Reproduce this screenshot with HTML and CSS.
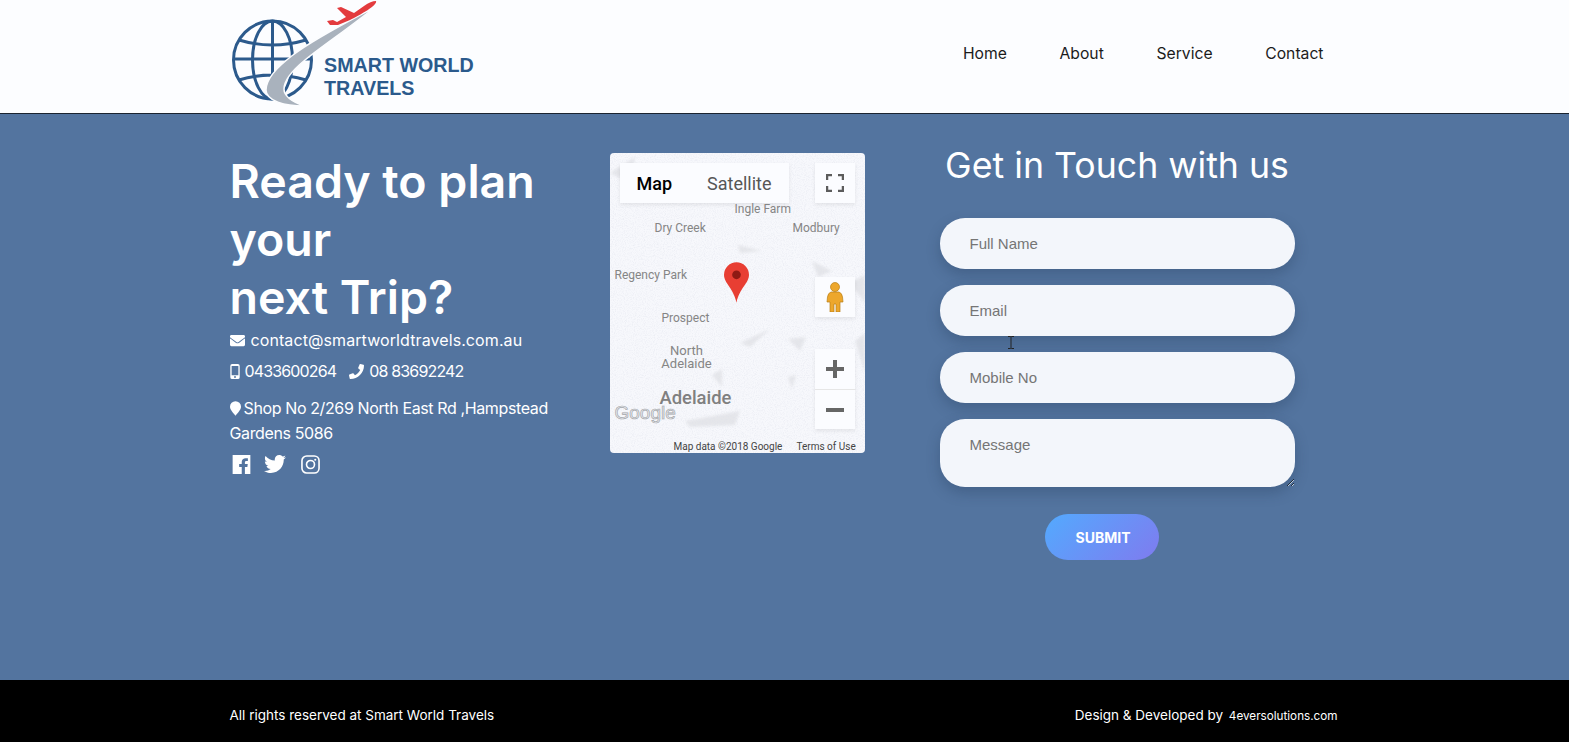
FILE: index.html
```html
<!DOCTYPE html>
<html lang="en">
<head>
<meta charset="utf-8">
<title>Smart World Travels</title>
<link rel="stylesheet" href="styles.css">
</head>
<body>
<header class="site-header">
  <div class="container header-inner">
    <svg class="logo" viewBox="0 0 250 113" width="250" height="113" role="img" aria-label="Smart World Travels">
      <g class="globe">
        <circle cx="42.5" cy="60" r="39"/>
        <ellipse cx="42.5" cy="60" rx="20" ry="39"/>
        <path d="M42.500 21V99M3.500 59H81M9 40Q42 50 76 40M9 80Q42 70 76 80"/>
      </g>
      <path class="swoosh" d="M145 7C115 23 82 40 63 55C47 67 36 80 36 90C36 101 55 106 74 106C63 102 54 97 54 89C54 80 64 69 75 60C92 46 122 26 145 7Z"/>
      <path class="plane" d="M146 1C148 5 130 15 120 20L108 25L100 25L97 21L103 20L107 22L116 17L107 8L111 7L124 13L134 6Q141 1 146 1Z"/>
      <text class="logo-text" x="94" y="72">SMART WORLD</text>
      <text class="logo-text" x="94" y="95">TRAVELS</text>
    </svg>
    <nav class="nav">
      <a href="#">Home</a>
      <a href="#">About</a>
      <a href="#">Service</a>
      <a href="#">Contact</a>
    </nav>
  </div>
</header>

<main class="main">
  <div class="container content">
    <section class="info">
      <h1>Ready to plan<br>your<br>next Trip?</h1>
      <p class="line email">
        <svg class="ic ic-mail" viewBox="0 0 512 512"><path d="M502.3 190.8c3.9-3.1 9.7-.2 9.7 4.7V400c0 26.5-21.5 48-48 48H48c-26.5 0-48-21.5-48-48V195.6c0-5 5.7-7.8 9.7-4.7 22.4 17.4 52.1 39.5 154.1 113.6 21.1 15.4 56.7 47.8 92.2 47.6 35.7.3 72-32.8 92.3-47.6 102-74.1 131.6-96.3 154-113.7zM256 320c23.2.4 56.6-29.2 73.4-41.4 132.7-96.3 142.8-104.7 173.4-128.7 5.8-4.5 9.2-11.5 9.2-18.9v-19c0-26.5-21.5-48-48-48H48C21.5 64 0 85.5 0 112v19c0 7.4 3.4 14.3 9.2 18.9 30.6 23.9 40.7 32.4 173.4 128.7 16.8 12.2 50.2 41.8 73.4 41.4z"/></svg>
        <span>contact@smartworldtravels.com.au</span>
      </p>
      <p class="line phones">
        <svg class="ic ic-mobile" viewBox="0 0 10 16"><path d="M2 0H8A2 2 0 0 1 10 2V14A2 2 0 0 1 8 16H2A2 2 0 0 1 0 14V2A2 2 0 0 1 2 0ZM1.400 2.200V12H8.600V2.200ZM5 12.800A1 1 0 1 0 5 14.800A1 1 0 1 0 5 12.800Z" fill-rule="evenodd"/></svg>
        <span>0433600264</span>
        <svg class="ic ic-phone" viewBox="0 0 512 512"><path d="M493.4 24.6l-104-24c-11.3-2.6-22.9 3.3-27.5 13.9l-48 112c-4.2 9.8-1.4 21.3 6.9 28l60.6 49.6c-36 76.7-98.9 140.5-177.2 177.2l-49.6-60.6c-6.8-8.3-18.2-11.1-28-6.9l-112 48C3.9 366.5-2 378.1.6 389.4l24 104C27.1 504.2 36.7 512 48 512c256.1 0 464-207.5 464-464 0-11.2-7.7-20.9-18.6-23.4z"/></svg>
        <span>08 83692242</span>
      </p>
      <p class="address"><svg class="ic ic-pin" viewBox="0 0 12 16"><path d="M6 0A6 6 0 0 1 12 6C12 9.500 8 13 6 16C4 13 0 9.500 0 6A6 6 0 0 1 6 0Z"/></svg>Shop No 2/269 North East Rd ,Hampstead Gardens 5086</p>
      <div class="social">
        <svg class="ic-social" viewBox="0 0 448 480"><path d="M0 0H448V480H310V300H372L382 225H310V180Q310 150 345 150H385V85Q360 80 330 80C270 80 230 115 230 175V225H165V300H230V480H0Z"/></svg>
        <svg class="ic-social tw" viewBox="0 48 512 416"><path d="M459.37 151.716c.325 4.548.325 9.097.325 13.645 0 138.72-105.583 298.558-298.558 298.558-59.452 0-114.68-17.219-161.137-47.106 8.447.974 16.568 1.299 25.34 1.299 49.055 0 94.213-16.568 130.274-44.832-46.132-.975-84.792-31.188-98.112-72.772 6.498.974 12.995 1.624 19.818 1.624 9.421 0 18.843-1.3 27.614-3.573-48.081-9.747-84.143-51.98-84.143-102.985v-1.299c13.969 7.797 30.214 12.67 47.431 13.319-28.264-18.843-46.781-51.005-46.781-87.391 0-19.492 5.197-37.36 14.294-52.954 51.655 63.675 129.3 105.258 216.365 109.807-1.624-7.797-2.599-15.918-2.599-24.04 0-57.828 46.782-104.934 104.934-104.934 30.213 0 57.502 12.67 76.67 33.137 23.715-4.548 46.456-13.32 66.599-25.34-7.798 24.366-24.366 44.833-46.132 57.827 21.117-2.273 41.584-8.122 60.426-16.243-14.292 20.791-32.161 39.308-52.628 54.253z"/></svg>
        <svg class="ic-social ig" viewBox="0 0 20 20"><rect x="1" y="1" width="18" height="18" rx="5"/><circle cx="10" cy="10" r="4.200"/><circle class="dot" cx="15" cy="5" r="1.100"/></svg>
      </div>
    </section>

    <section class="map">
      <svg class="map-bg" viewBox="0 0 255 300" width="255" height="300">
        <defs>
          <filter id="grain" x="0" y="0" width="100%" height="100%">
            <feTurbulence type="fractalNoise" baseFrequency="0.9" numOctaves="2" seed="4"/>
            <feColorMatrix values="0 0 0 0 .72  0 0 0 0 .74  0 0 0 0 .82  1 0 0 0 -.42"/>
          </filter>
          <filter id="soft"><feGaussianBlur stdDeviation="1.500"/></filter>
        </defs>
        <g class="blots" filter="url(#soft)">
          <path d="M135 48L150 44L148 50Z"/>
          <path d="M128 92L152 98L130 100Z"/>
          <path d="M202 108L222 118L208 124Z"/>
          <path d="M130 190L160 176L140 194Z"/>
          <path d="M178 186L196 184L190 198Z"/>
          <path d="M102 222L112 216L112 234Z"/>
          <path d="M178 224L186 222L182 236Z"/>
          <path d="M75 268L130 258L125 272L80 274Z"/>
          <path d="M240 130L255 122V150Z"/>
          <path d="M245 188L255 180V220Z"/>
          <path d="M0 20L25 4L20 30Z"/>
        </g>
        <rect width="255" height="300" filter="url(#grain)"/>
      </svg>
      <div class="tabs"><span class="tab-active">Map</span><span>Satellite</span></div>
      <div class="ctrl fullscreen">
        <svg viewBox="0 0 18 18" width="18" height="18"><path d="M1 6V1H6M12 1H17V6M17 12V17H12M6 17H1V12"/></svg>
      </div>
      <div class="ctrl pegman">
        <svg viewBox="0 0 18 30" width="18" height="30"><circle cx="9" cy="5" r="4.500"/><path d="M5 10H13Q16 11 16.500 15L17 20H14V30H10V22H8V30H4V20H1L1.500 15Q2 11 5 10Z"/></svg>
      </div>
      <div class="ctrl zoomer">
        <div class="zoom-btn"><svg viewBox="0 0 18 18" width="18" height="18"><path d="M7 0H11V7H18V11H11V18H7V11H0V7H7Z"/></svg></div>
        <div class="zoom-btn"><svg viewBox="0 0 18 18" width="18" height="18"><path d="M0 7H18V11H0Z"/></svg></div>
      </div>
      <svg class="marker" viewBox="0 0 26 42" width="25" height="41"><path d="M13 0A13 13 0 0 1 26 13C26 22 16 27 13 42C10 27 0 22 0 13A13 13 0 0 1 13 0Z"/><circle cx="13" cy="13" r="4.500"/></svg>
      <span class="place ingle">Ingle Farm</span>
      <span class="place dry">Dry Creek</span>
      <span class="place modbury">Modbury</span>
      <span class="place regency">Regency Park</span>
      <span class="place prospect">Prospect</span>
      <span class="place north">North<br>Adelaide</span>
      <span class="place adelaide">Adelaide</span>
      <span class="google">Google</span>
      <span class="attrib data">Map data ©2018 Google</span>
      <span class="attrib terms">Terms of Use</span>
    </section>

    <section class="contact">
      <h2>Get in Touch with us</h2>
      <form class="form">
        <input class="field" type="text" placeholder="Full Name">
        <input class="field" type="text" placeholder="Email">
        <input class="field" type="text" placeholder="Mobile No">
        <textarea class="field message" placeholder="Message"></textarea>
        <button class="submit" type="button">SUBMIT</button>
        <svg class="ibeam" viewBox="0 0 8 13" width="8" height="13"><path d="M1 .500H3.500L4 1L4.500 .500H7M4 1V12M1 12.500H3.500L4 12L4.500 12.500H7"/></svg>
      </form>
    </section>
  </div>
</main>

<footer class="footer">
  <div class="container footer-inner">
    <span>All rights reserved at Smart World Travels</span>
    <span class="credit">Design &amp; Developed by <small>4eversolutions.com</small></span>
  </div>
</footer>
</body>
</html>
```
FILE: styles.css
```css
* { box-sizing: border-box; }
html, body { margin: 0; padding: 0; }
body {
  font-family: Inter, "Open Sans", "Liberation Sans", sans-serif;
  color: #fff;
  background: #53749f;
  height: 742px;
  overflow: hidden;
}
.container { width: 1110px; margin: 0 auto; }

/* header */
.site-header {
  height: 114px;
  background: #fcfdff;
  border-bottom: 1px solid #1b2430;
}
.header-inner {
  display: flex;
  justify-content: space-between;
  align-items: center;
  height: 113px;
}
.logo { display: block; flex: none; }
.globe { fill: none; stroke: #2c5a8c; stroke-width: 3; }
.swoosh { fill: #a9b2bd; stroke: #fcfdff; stroke-width: 1.500; }
.plane { fill: #e33b3e; }
.logo-text {
  font-family: "Liberation Sans", Arial, sans-serif;
  font-weight: 700;
  font-size: 19.700px;
  fill: #2b5a8c;
}
.nav {
  display: flex;
  gap: 52.700px;
  padding-right: 16px;
  margin-top: -6px;
}
.nav a {
  color: #1b1b1b;
  text-decoration: none;
  font-size: 15.700px;
  line-height: 24px;
}

/* main */
.main { height: 566px; padding-top: 38px; }
.content {
  display: grid;
  grid-template-columns: 350px 255px 445px;
  column-gap: 30px;
  align-items: start;
}
.info h1 {
  margin: 0;
  font-size: 46.500px;
  line-height: 58px;
  font-weight: 600;
  letter-spacing: 0;
}
.line {
  margin: 0;
  display: flex;
  align-items: center;
  font-size: 16px;
  height: 24px;
}
.email { margin-top: 2px; letter-spacing: .09px; }
.phones { margin-top: 7px; letter-spacing: -.85px; }
.ic { fill: #fff; flex: none; }
.ic-mail { width: 15px; height: 15px; margin-right: 6px; }
.ic-mobile { width: 10px; height: 15px; margin-right: 5px; }
.ic-phone { width: 15px; height: 15px; margin: 0 5px 0 13px; }
.ic-pin { width: 11px; height: 15px; margin-right: 3px; vertical-align: -2px; }
.address {
  margin: 13px 0 0;
  font-size: 16px;
  line-height: 25px;
  letter-spacing: -.38px;
}
.social {
  display: flex;
  align-items: center;
  gap: 14px;
  margin-top: 6px;
  height: 24px;
}
.ic-social { width: 19px; height: 19px; fill: #fff; display: block; margin-left: 2px; }
.ic-social.tw { width: 22px; height: 18px; margin-left: -1px; }
.ic-social.ig { fill: none; stroke: #fff; stroke-width: 1.700; margin-left: 1px; }
.ic-social .dot { fill: #fff; stroke: none; }

/* map */
.map {
  position: relative;
  height: 300px;
  margin-top: 1px;
  border-radius: 4px;
  overflow: hidden;
  background: #f7f8fc;
  font-family: Roboto, "Liberation Sans", sans-serif;
}
.map-bg { position: absolute; left: 0; top: 0; }
.blots { fill: #e5e6ea; }
.tabs {
  position: absolute;
  left: 10px;
  top: 10px;
  width: 169px;
  height: 40px;
  display: flex;
  align-items: center;
  gap: 35px;
  padding-left: 17px;
  background: #fbfcff;
  box-shadow: 0 2px 4px rgba(0, 0, 0, .08);
  font-size: 18px;
  color: #565656;
}
.tab-active { color: #000; font-weight: 500; }
.ctrl {
  position: absolute;
  left: 205px;
  width: 40px;
  background: #fbfcff;
  box-shadow: 0 2px 4px rgba(0, 0, 0, .08);
  display: flex;
  align-items: center;
  justify-content: center;
}
.fullscreen { top: 10px; height: 40px; }
.fullscreen path { fill: none; stroke: #5c5c5c; stroke-width: 2.500; }
.pegman { top: 124px; height: 40px; }
.pegman svg { fill: #eda72c; stroke: #b98019; stroke-width: .7; }
.zoomer { top: 196px; height: 80px; flex-direction: column; }
.zoom-btn {
  width: 100%;
  height: 40px;
  display: flex;
  align-items: center;
  justify-content: center;
}
.zoom-btn + .zoom-btn { border-top: 1px solid #e6e6e6; }
.zoom-btn svg { fill: #666; }
.marker { position: absolute; left: 114px; top: 109px; }
.marker path { fill: #e83e33; }
.marker circle { fill: #8e1a14; }
.place {
  position: absolute;
  color: #858585;
  font-size: 12px;
  line-height: 13px;
  white-space: nowrap;
}
.ingle { left: 125px; top: 50px; }
.dry { left: 45px; top: 69px; }
.modbury { left: 183px; top: 69px; }
.regency { left: 5px; top: 116px; }
.prospect { left: 52px; top: 159px; }
.north { left: 50px; top: 191px; width: 54px; text-align: center; font-size: 13px; }
.adelaide { left: 50px; top: 235px; font-size: 18.400px; line-height: 20px; font-weight: 500; color: #808080; }
.google {
  position: absolute;
  left: 5px;
  top: 249px;
  font-family: "Liberation Sans", sans-serif;
  font-size: 19px;
  font-weight: 400;
  line-height: 22px;
  color: #eceef2;
  -webkit-text-stroke: .7px #a4a6aa;
}
.attrib {
  position: absolute;
  top: 288px;
  font-size: 10px;
  line-height: 12px;
  color: #444;
  white-space: nowrap;
}
.data { left: 64px; }
.terms { left: 187px; }

/* contact */
.contact { display: flex; flex-direction: column; align-items: center; }
.contact h2 {
  margin: -12px 0 0;
  font-size: 35.700px;
  line-height: 50px;
  font-weight: 400;
  height: 50px;
  white-space: nowrap;
}
.form {
  position: relative;
  width: 355px;
  margin-top: 28px;
  display: flex;
  flex-direction: column;
  gap: 16px;
}
.field {
  display: block;
  width: 100%;
  height: 51px;
  border: 0;
  border-radius: 25px;
  padding: 0 30px;
  background: #f3f6fb;
  font-family: "Liberation Sans", Arial, sans-serif;
  font-size: 15px;
  color: #333;
  box-shadow: 0 6px 14px rgba(30, 50, 80, .28);
  outline: none;
}
.field::placeholder { color: #757575; opacity: 1; }
.message {
  height: 68px;
  padding-top: 17px;
  resize: vertical;
}
.submit {
  align-self: center;
  width: 114px;
  height: 46px;
  margin: 11px 0 0 -31px;
  border: 0;
  border-radius: 23px;
  background: linear-gradient(135deg, #53aafe, #7f7bef);
  color: #fff;
  font-family: Inter, "Liberation Sans", sans-serif;
  font-size: 14px;
  font-weight: 700;
  padding: 0 0 0 3px;
}
.ibeam {
  position: absolute;
  left: 67px;
  top: 118px;
  fill: none;
  stroke: #222;
  stroke-width: 1;
}

/* footer */
.footer { height: 62px; background: #000; }
.footer-inner {
  height: 70px;
  display: flex;
  justify-content: space-between;
  align-items: center;
  font-size: 13.500px;
  padding-right: 2px;
}
.credit small { font-size: 11.700px; margin-left: 2px; }
```
